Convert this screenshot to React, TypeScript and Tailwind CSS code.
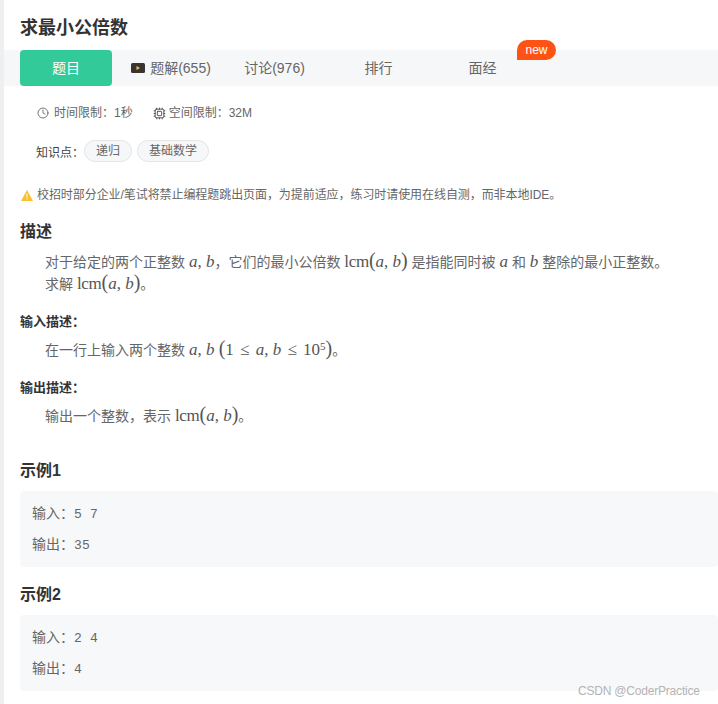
import { Clock, Cpu } from "lucide-react";
import type { ReactNode } from "react";

const tabs = ["讨论(976)", "排行", "面经"];

function V({ children }: { children: ReactNode }) {
  return <span className="italic">{children}</span>;
}

function Math({ children }: { children: ReactNode }) {
  return <span className="font-['Liberation_Serif',serif] text-[17px] leading-none text-[#555]">{children}</span>;
}

function Paren({ children }: { children: string }) {
  return <span className="text-[20px] leading-[0] font-light">{children}</span>;
}

function Lcm() {
  return (
    <Math>
      <span className="tracking-[-0.3px]">lcm</span><Paren>(</Paren><V>a</V>, <V>b</V><Paren>)</Paren>
    </Math>
  );
}

function SampleBox({ input, output }: { input: string; output: string }) {
  return (
    <div className="mt-[8px] h-[76px] rounded bg-[#f7f8fa] px-3 pt-[12px] text-[13px] leading-5 text-[#666]">
      <p>
        <span className="text-[14px]">输入：</span>
        <span className="font-['Liberation_Mono',monospace] text-[13px] tracking-[0.2px]">{input}</span>
      </p>
      <p className="mt-[9px]">
        <span className="text-[14px]">输出：</span>
        <span className="font-['Liberation_Mono',monospace] text-[13px] tracking-[0.2px]">{output}</span>
      </p>
    </div>
  );
}

export default function App() {
  return (
    <div className="relative flex h-[704px] w-[718px] overflow-hidden bg-white font-['Liberation_Sans','Noto_Sans_CJK_SC',sans-serif] text-[#555]">
      <div className="w-1 shrink-0 bg-[#efefef]" />
      <main className="min-w-0 flex-1">
        <h1 className="pl-4 pt-[16px] text-[18px] leading-6 font-bold text-[#333]">求最小公倍数</h1>

        {/* Tabs */}
        <div className="relative mt-[10px] flex h-9 gap-3 bg-[#f6f7f9] pl-4 text-[14px] text-[#666]">
          <div className="flex w-[92px] items-center justify-center rounded bg-[#32ca99] text-white">题目</div>
          <div className="flex w-[92px] items-center justify-center gap-[5px] pl-[2px]">
            <svg width="14" height="10" viewBox="0 0 14 10" className="shrink-0">
              <rect width="14" height="10" rx="1.5" fill="#3a3532" />
              <path d="M5.5 3 L9 5 L5.5 7 Z" fill="#f5c451" />
            </svg>
            <span className="whitespace-nowrap">题解(655)</span>
          </div>
          {tabs.map((t) => (
            <div key={t} className="flex w-[92px] items-center justify-center pl-[1px]">
              {t}
            </div>
          ))}
          <span className="absolute top-[-10px] left-[513px] flex h-5 w-[39px] items-center justify-center rounded-[10px] rounded-bl-none bg-[#ff5316] text-[12px] text-white">
            new
          </span>
        </div>

        {/* Limits */}
        <div className="mt-[19px] flex items-center pl-[33px] text-[12px] leading-4 text-[#666]">
          <Clock size={12} strokeWidth={1.6} className="text-[#555]" />
          <span className="ml-[5px]">时间限制：1秒</span>
          <Cpu size={13} strokeWidth={1.8} className="ml-[20px] text-[#555]" />
          <span className="ml-[3px]">空间限制：32M</span>
        </div>

        {/* Tags */}
        <div className="mt-[19px] flex items-center pl-8 text-[12px] text-[#555]">
          <span className="mt-[4px] w-12 text-[#444]">知识点：</span>
          <span className="rounded-full border border-[#e3e5e8] bg-[#f6f7f9] px-[11px] leading-5 text-[#666]">递归</span>
          <span className="ml-[5px] rounded-full border border-[#e3e5e8] bg-[#f6f7f9] px-[11px] leading-5 text-[#666]">基础数学</span>
        </div>

        {/* Notice */}
        <div className="mt-[25px] flex items-center pl-[17px] text-[12px] leading-4 tracking-[-0.07px] text-[#666]">
          <svg width="12" height="11" viewBox="0 0 12 11">
            <path d="M6 0 L12 11 L0 11 Z" fill="#fbc02d" />
            <rect x="5.5" y="3.5" width="1" height="4" fill="#fff" />
            <rect x="5.5" y="8.5" width="1" height="1" fill="#fff" />
          </svg>
          <span className="ml-1">校招时部分企业/笔试将禁止编程题跳出页面，为提前适应，练习时请使用在线自测，而非本地IDE。</span>
        </div>

        {/* Description */}
        <section className="pl-4">
          <h2 className="mt-[17px] text-[16px] leading-6 font-semibold text-[#333]">描述</h2>
          <div className="mt-[7px] pl-[25px] text-[14px] leading-[22px] text-[#666]">
            <p>
              对于给定的两个正整数 <Math><V>a</V>, <V>b</V></Math>，它们的最小公倍数 <Lcm /> 是指能同时被 <Math><V>a</V></Math> 和 <Math><V>b</V></Math> 整除的最小正整数。
            </p>
            <p>
              求解 <Lcm />。
            </p>
          </div>

          <h3 className="mt-[17px] text-[13px] leading-5 font-bold text-[#333]">输入描述：</h3>
          <p className="mt-[7px] pl-[25px] text-[14px] leading-[22px] text-[#666]">
            在一行上输入两个整数 <Math><V>a</V>, <V>b</V> <Paren>(</Paren>1 <span className="mx-[2px]">≤</span> <V>a</V>, <V>b</V> <span className="mx-[2px]">≤</span> 10<sup className="text-[11px]">5</sup><Paren>)</Paren></Math>。
          </p>

          <h3 className="mt-[17px] text-[13px] leading-5 font-bold text-[#333]">输出描述：</h3>
          <p className="mt-[7px] pl-[25px] text-[14px] leading-[22px] text-[#666]">
            输出一个整数，表示 <Lcm />。
          </p>

          {/* Samples */}
          <h2 className="mt-[32px] text-[16px] leading-6 font-bold text-[#333]">示例1</h2>
          <SampleBox input="5 7" output="35" />
          <h2 className="mt-[16px] text-[16px] leading-6 font-bold text-[#333]">示例2</h2>
          <SampleBox input="2 4" output="4" />
        </section>
      </main>
      <span className="absolute top-[683px] left-[578px] text-[12px] leading-4 tracking-[-0.2px] text-[#b4b4b4]">CSDN @CoderPractice</span>
    </div>
  );
}
